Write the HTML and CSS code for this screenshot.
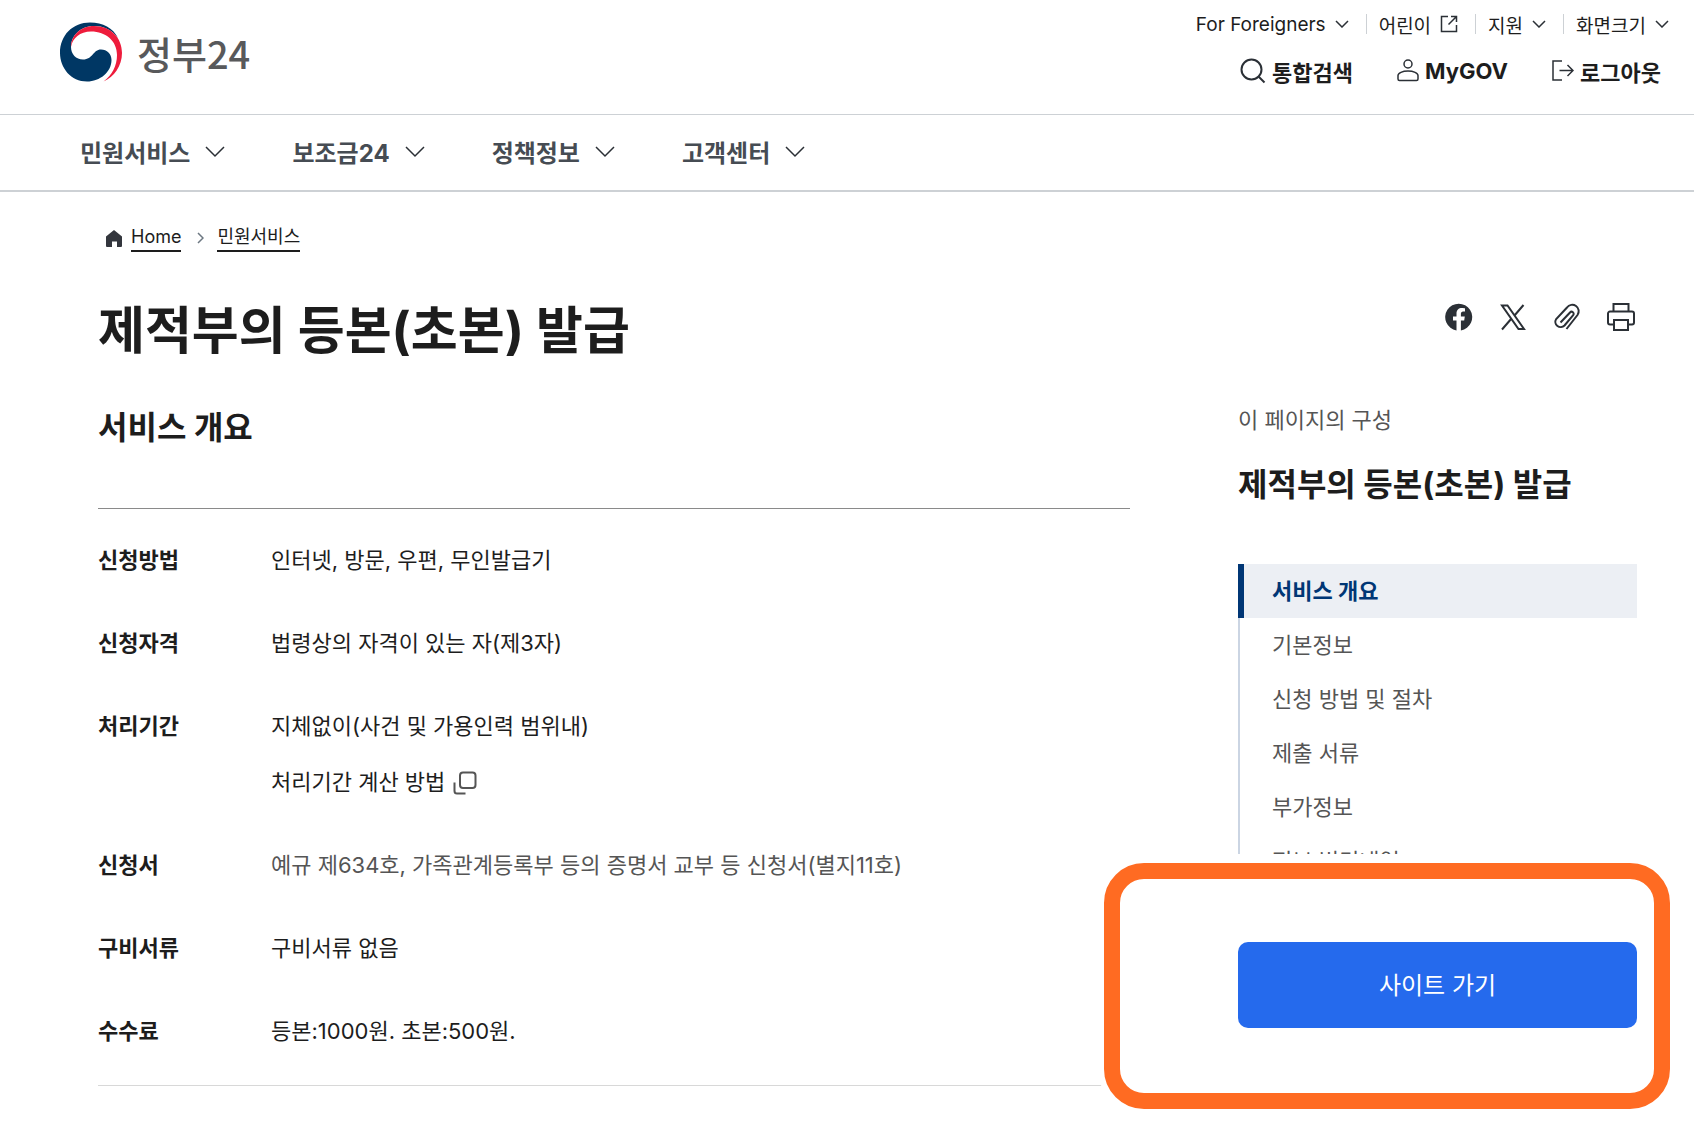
FILE: index.html
```html
<!DOCTYPE html>
<html lang="ko">

<head>
    <meta charset="UTF-8">
    <meta name="viewport" content="width=device-width, initial-scale=1.0">
    <title>제적부의 등본(초본) 발급 | 정부24</title>
    <link rel="stylesheet" href="styles.css">
</head>

<body>
    <header class="header">
        <a href="#" class="logo">
            <svg class="logo-mark" viewBox="0 0 62 60" aria-hidden="true">
                <path fill="#003764" d="M27 59.500C11 59.500 0 46 0 31C0 13 13 0.500 30 0.500C43 0.500 53 6 58 16C51 7 43 4 34 4C20 4 11 14 11 25C11 32 16 37.500 23 37.500C33 37.500 33 27.500 41 27.500C47 27.500 51.500 32 51.500 38C51.500 50 40 59.500 27 59.500Z" />
                <path fill="#ee1c3c" d="M11 25C11 14 20 4 34 4C51 4 62 16 62 31C62 44 54 55 43.500 59.500C52 53 57 44 57 33C57 19 46 9.500 31 9.500C20 9.500 12.500 16 11 25Z" />
            </svg>
            <span>정부24</span>
        </a>
        <div class="header-menu">
            <ul class="util">
                <li><button type="button">For Foreigners <svg class="chevron-sm" viewBox="0 0 14 8"><path d="M1 1l6 6 6-6" /></svg></button></li>
                <li><a href="#">어린이 <svg class="icon-out" viewBox="0 0 18 18"><path d="M8 1.500H1.500v15h15V10M11 1.500h5.500V7M16.500 1.500L8.500 9.500" /></svg></a></li>
                <li><button type="button">지원 <svg class="chevron-sm" viewBox="0 0 14 8"><path d="M1 1l6 6 6-6" /></svg></button></li>
                <li><button type="button">화면크기 <svg class="chevron-sm" viewBox="0 0 14 8"><path d="M1 1l6 6 6-6" /></svg></button></li>
            </ul>
            <ul class="member">
                <li><button type="button"><svg class="icon-search" viewBox="0 0 26 26"><circle cx="11.500" cy="11.500" r="10" /><path d="M18.500 18.500l6 6" /></svg>통합검색</button></li>
                <li><a href="#"><svg class="icon-user" viewBox="0 0 22 24"><circle cx="11" cy="5" r="4" /><path d="M2.500 21.500h17a1.500 1.500 0 0 0 1.500-1.500v-3.500c0-2.500-4.500-4.500-10-4.500s-10 2-10 4.500V20A1.500 1.500 0 0 0 2.500 21.500z" /></svg>MyGOV</a></li>
                <li><a href="#"><svg class="icon-user" viewBox="0 0 22 24"><path d="M10 2H1v19H10M7.500 11.500h13.500M15.500 6L21 11.500l-5.500 5.500" /></svg>로그아웃</a></li>
            </ul>
        </div>
    </header>

    <nav class="gnb">
        <button type="button">민원서비스 <svg class="chevron" viewBox="0 0 20 12"><path d="M1 1l9 9 9-9" /></svg></button>
        <button type="button">보조금24 <svg class="chevron" viewBox="0 0 20 12"><path d="M1 1l9 9 9-9" /></svg></button>
        <button type="button">정책정보 <svg class="chevron" viewBox="0 0 20 12"><path d="M1 1l9 9 9-9" /></svg></button>
        <button type="button">고객센터 <svg class="chevron" viewBox="0 0 20 12"><path d="M1 1l9 9 9-9" /></svg></button>
    </nav>

    <main class="main">
        <div class="breadcrumb">
            <svg class="icon-home" viewBox="0 0 16 17"><path d="M8 0L16 6.500V16a1 1 0 0 1-1 1h-4v-5.500H6V17H1a1 1 0 0 1-1-1V6.500z" /></svg>
            <a href="#">Home</a>
            <svg class="icon-next" viewBox="0 0 7 12"><path d="M1 1l5 5-5 5" /></svg>
            <a href="#">민원서비스</a>
        </div>

        <div class="title-row">
            <h1>제적부의 등본(초본) 발급</h1>
            <div class="share">
                <button type="button" aria-label="페이스북 공유">
                    <svg viewBox="0 0 28 28"><path fill="#2b3036" stroke="none" d="M11.500 27.500V17.500H8V13.500h3.500V10.500c0-3.600 2.100-5.600 5.400-5.600 1.500 0 3.100.3 3.100.3v3.400h-1.800c-1.700 0-2.300 1.100-2.300 2.200v2.700h3.900l-.6 4h-3.300v10A13.500 13.500 0 1 0 11.500 27.500z" /></svg>
                </button>
                <button type="button" aria-label="X 공유">
                    <svg viewBox="0 0 28 28"><path d="M3 2.500h5.500L25 26h-5.500zM24.500 2L15.500 12.500M12.500 15.500L3 26.500" /></svg>
                </button>
                <button type="button" aria-label="링크 복사">
                    <svg viewBox="0 0 28 28"><path d="M7.500 19.500L17 9.500a2 2 0 0 1 3.200 2.600L11.500 22.500a5.300 5.300 0 0 1-8.300-6.500L14 4.500a6.300 6.300 0 0 1 10.500 7.500L13.500 26M7.500 19.500" /></svg>
                </button>
                <button type="button" aria-label="인쇄">
                    <svg viewBox="0 0 28 28"><path d="M6.500 8.500V1h15v7.500M7 21.500H3A2 2 0 0 1 1 19.500v-9a2 2 0 0 1 2-2h22a2 2 0 0 1 2 2v9a2 2 0 0 1-2 2h-4M7 17h14v10H7z" /></svg>
                </button>
            </div>
        </div>

        <div class="content">
            <section class="overview">
                <h2>서비스 개요</h2>
                <dl class="info">
                    <dt>신청방법</dt>
                    <dd>인터넷, 방문, 우편, 무인발급기</dd>
                    <dt>신청자격</dt>
                    <dd>법령상의 자격이 있는 자(제3자)</dd>
                    <dt>처리기간</dt>
                    <dd>
                        <p>지체없이(사건 및 가용인력 범위내)</p>
                        <button type="button" class="popup-link">처리기간 계산 방법
                            <svg viewBox="0 0 24 24"><rect x="7" y="1.500" width="15.500" height="15.500" rx="3" /><path d="M1.500 11.500V20A2.500 2.500 0 0 0 4 22.500h8.500" /></svg>
                        </button>
                    </dd>
                    <dt>신청서</dt>
                    <dd class="muted">예규 제634호, 가족관계등록부 등의 증명서 교부 등 신청서(별지11호)</dd>
                    <dt>구비서류</dt>
                    <dd>구비서류 없음</dd>
                    <dt>수수료</dt>
                    <dd>등본:1000원. 초본:500원.</dd>
                </dl>
            </section>

            <aside class="side">
                <p class="side-label">이 페이지의 구성</p>
                <h3>제적부의 등본(초본) 발급</h3>
                <ul class="toc">
                    <li><a href="#" class="active">서비스 개요</a></li>
                    <li><a href="#">기본정보</a></li>
                    <li><a href="#">신청 방법 및 절차</a></li>
                    <li><a href="#">제출 서류</a></li>
                    <li><a href="#">부가정보</a></li>
                    <li><a href="#">정보 변경내역</a></li>
                </ul>
                <div class="go">
                    <button type="button">사이트 가기</button>
                </div>
            </aside>
        </div>
    </main>
</body>

</html>
```
FILE: styles.css
```css
* {
    box-sizing: border-box;
    margin: 0;
    padding: 0;
}

body {
    font-family: Inter, "Noto Sans CJK KR", sans-serif;
    font-size: 22px;
    color: #1d1d1d;
    background-color: #fff;
}

ul {
    list-style: none;
}

a {
    color: inherit;
    text-decoration: none;
}

button {
    font: inherit;
    color: inherit;
    background: none;
    border: none;
    cursor: pointer;
}

svg {
    display: block;
    flex: none;
    fill: none;
    stroke: #2b3036;
    stroke-width: 1.5;
}

/* header */
.header {
    display: flex;
    justify-content: space-between;
    height: 115px;
    padding: 0 25px 0 60px;
    border-bottom: 1px solid #cdd1d5;
}

.logo {
    display: flex;
    align-items: center;
    gap: 15px;
    height: 104px;
    font-family: "Noto Sans CJK KR", sans-serif;
    font-size: 38px;
    font-weight: 500;
    color: #58595b;
}

.logo-mark {
    width: 62px;
    height: 60px;
    stroke: none;
}

.header-menu {
    display: flex;
    flex-direction: column;
    gap: 14px;
    padding-top: 9px;
}

.util,
.member {
    display: flex;
    justify-content: flex-end;
    align-items: center;
}

.util {
    height: 30px;
    font-size: 19px;
}

.util li + li {
    margin-left: 17px;
    padding-left: 12px;
    border-left: 1px solid #cdd1d5;
}

.util li {
    height: 20px;
    display: flex;
    align-items: center;
}

.util a,
.util button {
    display: flex;
    align-items: center;
    gap: 9px;
}

.chevron-sm {
    width: 14px;
    height: 8px;
}

.icon-out {
    width: 18px;
    height: 18px;
}

.member {
    gap: 44px;
    height: 36px;
    padding-right: 8px;
    font-weight: 700;
}

.member a,
.member button {
    display: flex;
    align-items: center;
    gap: 6px;
}

.icon-search {
    width: 26px;
    height: 26px;
    stroke-width: 2;
}

.icon-user {
    width: 22px;
    height: 24px;
}

/* main menu */
.gnb {
    display: flex;
    align-items: center;
    gap: 67px;
    height: 77px;
    padding: 0 80px 2px;
    border-bottom: 2px solid #cdd1d5;
}

.gnb button {
    display: flex;
    align-items: center;
    gap: 15px;
    font-size: 24px;
    font-weight: 700;
    color: #464c53;
}

.chevron {
    width: 20px;
    height: 12px;
}

/* page */
.main {
    padding: 32px 57px 54px 98px;
}

.breadcrumb {
    display: flex;
    align-items: center;
    height: 28px;
    margin-bottom: 49px;
    padding-left: 8px;
    font-size: 18px;
}

.breadcrumb a {
    line-height: 26px;
    border-bottom: 2px solid #1d1d1d;
}

.icon-home {
    width: 16px;
    height: 17px;
    margin-right: 9px;
    fill: #33363d;
    stroke: none;
}

.icon-next {
    width: 7px;
    height: 12px;
    margin: 0 13px 0 16px;
    stroke: #6d7882;
}

.title-row {
    display: flex;
    justify-content: space-between;
    align-items: flex-start;
    margin-bottom: 42px;
}

h1 {
    font-size: 51px;
    line-height: 60px;
}

.share {
    display: flex;
    gap: 26px;
    padding: 2px 2px 0 0;
}

.share svg {
    width: 28px;
    height: 28px;
    stroke-width: 2;
}

.content {
    display: grid;
    grid-template-columns: 1fr 399px;
    gap: 108px;
}

h2,
h3 {
    font-size: 32px;
    line-height: 50px;
}

.info {
    display: grid;
    grid-template-columns: 173px 1fr;
    row-gap: 48px;
    margin-top: 55px;
    padding: 34px 0 36px;
    border-top: 1px solid #8a8a8a;
    border-bottom: 1px solid #d8d8d8;
    line-height: 35px;
}

.info dt {
    font-weight: 700;
}

.info .muted {
    color: #555;
}

.popup-link {
    display: flex;
    align-items: center;
    gap: 8px;
    margin-top: 21px;
    line-height: 35px;
}

.popup-link svg {
    width: 24px;
    height: 24px;
    stroke: #555;
    stroke-width: 2;
}

.side-label {
    line-height: 34px;
    color: #555;
}

.side h3 {
    margin: 23px 0 54px;
}

.toc {
    max-height: 290px;
    overflow: hidden;
}

.toc a {
    display: block;
    padding-left: 32px;
    border-left: 2px solid #cbd5e3;
    line-height: 54px;
    color: #555;
}

.toc .active {
    padding-left: 28px;
    border-left: 6px solid #003675;
    background-color: #eceff4;
    font-weight: 700;
    color: #003675;
}

.go {
    position: relative;
    margin-top: 88px;
}

/* highlight ring around the button */
.go::before {
    content: "";
    position: absolute;
    inset: -79px -33px -81px -134px;
    border: 16px solid #ff6b22;
    border-radius: 40px;
    background-color: #fff;
    box-shadow: 0 0 0 6px #fff;
}

.go button {
    position: relative;
    width: 100%;
    height: 86px;
    padding-bottom: 4px;
    border-radius: 10px;
    background-color: #256aed;
    font-size: 24px;
    color: #fff;
}
```
